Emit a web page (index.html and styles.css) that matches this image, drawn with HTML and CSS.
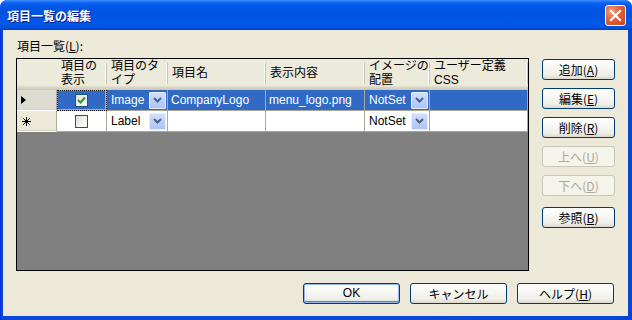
FILE: index.html
```html
<!DOCTYPE html>
<html lang="ja">
<head>
<meta charset="utf-8">
<title>項目一覧の編集</title>
<link rel="stylesheet" href="styles.css">
</head>
<body>
<div class="window">
  <div class="titlebar">
    <span class="title">項目一覧の編集</span>
    <button class="close" aria-label="閉じる">
      <svg width="13" height="13" viewBox="0 0 13 13"><path d="M2 2 L11 11 M11 2 L2 11" stroke="#fff" stroke-width="2.2" stroke-linecap="square"/></svg>
    </button>
  </div>
  <div class="content">
    <div class="label">項目一覧(<u>L</u>):</div>
    <div class="main">
      <div class="grid">
        <div class="hdr corner"></div>
        <div class="hdr"><span class="ht"><span class="hl">項目の</span><span class="hl">表示</span></span></div>
        <div class="hdr"><span class="ht"><span class="hl">項目のタ</span><span class="hl">イプ</span></span></div>
        <div class="hdr"><span class="ht">項目名</span></div>
        <div class="hdr"><span class="ht">表示内容</span></div>
        <div class="hdr"><span class="ht"><span class="hl">イメージの</span><span class="hl">配置</span></span></div>
        <div class="hdr"><span class="ht"><span class="hl">ユーザー定義</span><span class="hl">CSS</span></span></div>

        <div class="rowhdr current"><span class="arrow"></span></div>
        <div class="cell sel focus center"><span class="check on"><svg width="9" height="9" viewBox="0 0 9 9"><path d="M1 4 L3.5 6.5 L8 1.5" fill="none" stroke="#21a121" stroke-width="2"/></svg></span></div>
        <div class="cell sel combo"><span>Image</span><span class="dd"><svg width="9" height="6" viewBox="0 0 9 6"><path d="M1 1 L4.5 4.5 L8 1" fill="none" stroke="#4d6185" stroke-width="2"/></svg></span></div>
        <div class="cell sel">CompanyLogo</div>
        <div class="cell sel">menu_logo.png</div>
        <div class="cell sel combo"><span>NotSet</span><span class="dd"><svg width="9" height="6" viewBox="0 0 9 6"><path d="M1 1 L4.5 4.5 L8 1" fill="none" stroke="#4d6185" stroke-width="2"/></svg></span></div>
        <div class="cell sel"></div>

        <div class="rowhdr"><svg class="star" width="9" height="9" viewBox="0 0 9 9"><path d="M4.5 0 V9 M0 4.5 H9 M1.3 1.3 L7.7 7.7 M7.7 1.3 L1.3 7.7" stroke="#000" stroke-width="1"/></svg></div>
        <div class="cell center"><span class="check"></span></div>
        <div class="cell combo"><span>Label</span><span class="dd"><svg width="9" height="6" viewBox="0 0 9 6"><path d="M1 1 L4.5 4.5 L8 1" fill="none" stroke="#4d6185" stroke-width="2"/></svg></span></div>
        <div class="cell"></div>
        <div class="cell"></div>
        <div class="cell combo"><span>NotSet</span><span class="dd"><svg width="9" height="6" viewBox="0 0 9 6"><path d="M1 1 L4.5 4.5 L8 1" fill="none" stroke="#4d6185" stroke-width="2"/></svg></span></div>
        <div class="cell"></div>
      </div>
      <div class="side">
        <button class="btn">追加(<u>A</u>)</button>
        <button class="btn">編集(<u>E</u>)</button>
        <button class="btn">削除(<u>R</u>)</button>
        <button class="btn" disabled>上へ(<u>U</u>)</button>
        <button class="btn" disabled>下へ(<u>D</u>)</button>
        <button class="btn browse">参照(<u>B</u>)</button>
      </div>
    </div>
    <div class="footer">
      <button class="btn wide default">OK</button>
      <button class="btn wide">キャンセル</button>
      <button class="btn wide">ヘルプ(<u>H</u>)</button>
    </div>
  </div>
</div>
</body>
</html>
```
FILE: styles.css
```css
html, body {
  margin: 0;
  padding: 0;
  background: #fff;
}
body {
  font-family: "Liberation Sans", "Noto Sans CJK JP", sans-serif;
  font-size: 12px;
  color: #000;
}
.window {
  width: 632px;
  height: 320px;
  box-sizing: border-box;
  display: flex;
  flex-direction: column;
  background: linear-gradient(to right, #0831d9 0, #0a48dc 2px, #0a4ad8 50%, #0a44d6 100%);
  border-radius: 7px 7px 0 0;
  padding: 0 4px 4px 3px;
  overflow: hidden;
}
.titlebar {
  height: 30px;
  margin: 0 -4px 0 -3px;
  padding: 0 6px 0 7px;
  display: flex;
  align-items: center;
  justify-content: space-between;
  background: linear-gradient(to bottom, #3a8cff 0, #0a61f0 3px, #0055e5 8px, #0053e1 50%, #0058ea 80%, #0050e0 92%, #0040c4 100%);
  border-radius: 7px 7px 0 0;
}
.title {
  color: #fff;
  font-family: "Noto Sans CJK JP", sans-serif;
  font-weight: bold;
  font-size: 12px;
  text-shadow: 1px 1px 0 #0a1883;
  padding-top: 1px;
}
.close {
  width: 21px;
  height: 21px;
  padding: 0;
  border: 1px solid #fff;
  border-radius: 3px;
  background: radial-gradient(circle at 30% 30%, #f0a080 0, #e2613a 45%, #c9401c 100%);
  display: flex;
  align-items: center;
  justify-content: center;
}
.content {
  flex: 1;
  background: #ece9d8;
  padding: 8px 13px 12px 13px;
  display: flex;
  flex-direction: column;
}
.label {
  font-family: "Noto Sans CJK JP", sans-serif;
  height: 16px;
  line-height: 16px;
  margin-bottom: 4px;
  padding-left: 1px;
}
.main {
  display: flex;
  gap: 13px;
  height: 213px;
}
.grid {
  width: 513px;
  height: 213px;
  box-sizing: border-box;
  border: 1px solid #000;
  background: #808080;
  display: grid;
  grid-template-columns: 40px 50px 61px 98px 99px 65px 98px;
  grid-template-rows: 31px 21px 21px;
  align-content: start;
}
.hdr {
  box-sizing: border-box;
  background: linear-gradient(to bottom, #ebeadb 0, #ebeadb 85%, #e2decd 88%, #d6d2c2 94%, #cbc7b8 100%);
  padding: 0 4px 3px 4px;
  display: flex;
  align-items: center;
  position: relative;
  white-space: nowrap;
  overflow: hidden;
}
.ht {
  font-family: "Liberation Sans", "Noto Sans CJK JP", sans-serif;
  font-size: 12px;
  line-height: 14px;
  display: flex;
  flex-direction: column;
}
.hl {
  display: block;
  height: 14px;
  line-height: 14px;
}
.hdr::after {
  content: "";
  position: absolute;
  right: 0;
  top: 4px;
  bottom: 6px;
  width: 1px;
  background: #c7c5b2;
  box-shadow: -1px 0 0 #fff;
}
.hdr.corner::after {
  display: none;
}
.rowhdr {
  box-sizing: border-box;
  background: #ece9d8;
  border-right: 1px solid #aca899;
  border-bottom: 1px solid #fff;
  box-shadow: inset 0 -2px 0 -1px #d6d2c2;
  display: flex;
  align-items: center;
  padding-left: 3px;
}
.rowhdr.current {
  background: #dedcd2;
}
.arrow {
  width: 0;
  height: 0;
  border-left: 5px solid #000;
  border-top: 4px solid transparent;
  border-bottom: 4px solid transparent;
  margin-left: 1px;
}
.star {
  margin-left: 2px;
}
.cell {
  box-sizing: border-box;
  background: #fff;
  border-right: 1px solid #aca899;
  border-bottom: 1px solid #aca899;
  padding: 0 3px;
  display: flex;
  align-items: center;
  white-space: nowrap;
  overflow: hidden;
  font-family: "Liberation Sans", "Noto Sans CJK JP", sans-serif;
}
.cell.sel {
  background: #316ac5;
  color: #fff;
}
.cell.center {
  justify-content: center;
  padding: 0;
}
.cell.focus {
  outline: 1px dotted #000;
  outline-offset: -1px;
  box-shadow: inset 0 0 0 1px #d9a84a;
}
.cell.combo {
  justify-content: space-between;
  padding: 0 1px 0 4px;
}
.check {
  width: 13px;
  height: 13px;
  box-sizing: border-box;
  border: 1px solid #1c5180;
  background: linear-gradient(135deg, #dcdcd7 0, #f4f4f0 60%, #fff 100%);
  display: flex;
  align-items: center;
  justify-content: center;
}
.dd {
  width: 17px;
  height: 17px;
  box-sizing: border-box;
  border: 1px solid #e6eefc;
  border-radius: 1px;
  background: linear-gradient(to bottom, #d2e0fd 0, #bcd0f9 50%, #adc4f6 100%);
  display: flex;
  align-items: center;
  justify-content: center;
}
.side {
  width: 73px;
  display: flex;
  flex-direction: column;
  gap: 8px;
  padding-top: 1px;
}
.side .browse {
  margin-top: 3px;
}
.btn {
  width: 73px;
  height: 21px;
  box-sizing: border-box;
  border: 1px solid #003c74;
  border-radius: 3px;
  background: linear-gradient(to bottom, #ffffff 0, #f7f7f4 40%, #efeee8 80%, #dcd8cb 100%);
  font-family: "Noto Sans CJK JP", sans-serif;
  font-size: 12px;
  color: #000;
  padding: 0;
  line-height: 17px;
  flex: none;
}
.btn:disabled {
  border-color: #c9c7ba;
  background: #f5f4ea;
  color: #aca899;
}
.footer {
  margin-top: 12px;
  display: flex;
  justify-content: flex-end;
  gap: 10px;
  padding-right: 1px;
}
.btn.wide {
  width: 97px;
}
.btn.default {
  box-shadow: inset 0 0 0 1px #98b8ef, inset 0 -1px 0 1px #4e80e0;
  font-family: "Liberation Sans", "Noto Sans CJK JP", sans-serif;
}
```
